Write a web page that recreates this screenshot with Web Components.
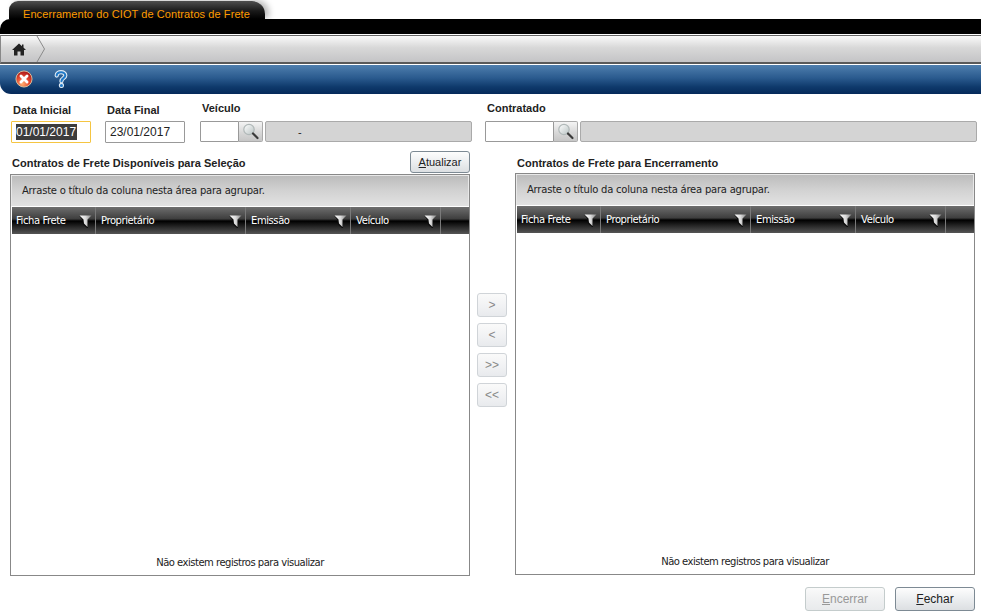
<!DOCTYPE html>
<html lang="pt-BR">
<head>
<meta charset="utf-8">
<title>Encerramento do CIOT de Contratos de Frete</title>
<style>
  html, body { margin: 0; padding: 0; background: #fff; }
  body { font-family: "Liberation Sans", Arial, sans-serif; width: 981px; height: 615px; overflow: hidden; }
</style>
</head>
<body>
<ciot-screen></ciot-screen>

<script>
const FUNNEL = `
  <svg width="13" height="13" viewBox="0 0 13 13">
    <defs><linearGradient id="fg" x1="0" x2="1" y1="0" y2="0">
      <stop offset="0" stop-color="#fafafa"/><stop offset=".5" stop-color="#dcdcdc"/><stop offset="1" stop-color="#858585"/>
    </linearGradient></defs>
    <path d="M0 .5 L3.5 5 L4 9.5 L8 13 L9 13 L8.5 5 Z" fill="#0c0c0c"/>
    <path d="M.5 .5 L12.5 .5 L8.5 4.5 L8.5 12 L5 8.5 L4.5 4.5 Z" fill="url(#fg)"/>
  </svg>`;

class TabStrip extends HTMLElement {
  constructor() {
    super();
    this.attachShadow({ mode: "open" });
  }
  connectedCallback() {
    this.shadowRoot.innerHTML = `
    <style>
      :host { display: block; height: 35px; background: #fff; }
      .tabs { height: 19px; padding-left: 9px; display: flex; }
      .tab {
        width: 256px; height: 18px; margin-top: 1px; box-sizing: border-box;
        padding: 6px 0 0 14px;
        background: linear-gradient(#4e4e4e, #1a1a1a 55%, #000);
        border-radius: 9px 13px 0 0;
        box-shadow: 4px -1px 6px rgba(0,0,0,.28);
        color: #ff9c00; font: 11px/14px "Liberation Sans", sans-serif; letter-spacing: .08px; white-space: nowrap;
      }
      .bar { height: 15px; background: #000; border-radius: 10px 0 0 0; }
    </style>
    <div class="tabs"><div class="tab"><slot></slot></div></div>
    <div class="bar"></div>`;
  }
}
customElements.define("tab-strip", TabStrip);

class BreadCrumb extends HTMLElement {
  constructor() {
    super();
    this.attachShadow({ mode: "open" });
  }
  connectedCallback() {
    this.shadowRoot.innerHTML = `
    <style>
      :host {
        display: flex; align-items: center; height: 29px; margin-bottom: 1px; box-sizing: border-box;
        border-top: 1px solid #666; border-bottom: 2px solid #5a5a5a; border-left: 1px solid #888;
        background: linear-gradient(#fafafa, #d8d8d8 45%, #c4c4c6);
      }
      .home { width: 35px; display: flex; justify-content: center; }
      svg { display: block; }
    </style>
    <div class="home">
      <svg width="14" height="13" viewBox="0 0 14 13"><path fill="#222" d="M7 .5 L10 3.2 V1.5 H11.5 V4.6 L14 7 H12 V12.5 H8.5 V8.5 H5.5 V12.5 H2 V7 H0 Z"/></svg>
    </div>
    <svg width="10" height="26" viewBox="0 0 10 26"><path d="M1 0 L8.5 13 L1 26" fill="none" stroke="#8a8a8a"/></svg>`;
  }
}
customElements.define("bread-crumb", BreadCrumb);

class ActionBar extends HTMLElement {
  constructor() {
    super();
    this.attachShadow({ mode: "open" });
  }
  connectedCallback() {
    this.shadowRoot.innerHTML = `
    <style>
      :host {
        display: flex; align-items: center; gap: 21px; height: 29px; box-sizing: border-box; padding: 0 0 1px 15px;
        background: linear-gradient(#4f7fae, #2a5a8e 45%, #0f3a6c 75%, #05295a);
        border-radius: 0 0 0 11px;
      }
      svg { display: block; }
    </style>
    <svg width="18" height="18" viewBox="0 0 19 19">
      <defs>
        <radialGradient id="red" cx=".4" cy=".8" r=".75"><stop offset="0" stop-color="#ffb070"/><stop offset=".55" stop-color="#e64a30"/><stop offset="1" stop-color="#b01c1c"/></radialGradient>
      </defs>
      <circle cx="9.5" cy="9.5" r="8.5" fill="url(#red)" stroke="#d8c4a0" stroke-width="1"/>
      <path d="M6.3 6.3 L12.7 12.7 M12.7 6.3 L6.3 12.7" stroke="#fff" stroke-width="3" stroke-linecap="round"/>
    </svg>
    <svg width="14" height="18" viewBox="0 0 16 21">
      <path d="M3 6.5 C3 1.5 13 1 13 6.5 C13 9.5 8.5 9.5 8.5 13" fill="none" stroke="#dfeaf4" stroke-width="5" stroke-linecap="round"/>
      <circle cx="8.5" cy="18" r="2.4" fill="#1f79c8" stroke="#dfeaf4" stroke-width="1.3"/>
      <path d="M3 6.5 C3 1.5 13 1 13 6.5 C13 9.5 8.5 9.5 8.5 13" fill="none" stroke="#1f79c8" stroke-width="2.4" stroke-linecap="round"/>
    </svg>`;
  }
}
customElements.define("action-bar", ActionBar);

class FormField extends HTMLElement {
  constructor() {
    super();
    this.attachShadow({ mode: "open" });
  }
  connectedCallback() {
    this.shadowRoot.innerHTML = `
    <style>
      :host { display: flex; flex-direction: column; }
      label {
        display: block; margin: 0 0 4px 2px;
        font: bold 11px/14px "Liberation Sans", sans-serif; color: #222; white-space: nowrap;
      }
      :host([raised]) label { margin-top: -2px; margin-bottom: 6px; }
    </style>
    <label>${this.getAttribute("label")}</label>
    <slot></slot>`;
  }
}
customElements.define("form-field", FormField);

class DateBox extends HTMLElement {
  constructor() {
    super();
    this.attachShadow({ mode: "open" });
  }
  connectedCallback() {
    this.shadowRoot.innerHTML = `
    <style>
      :host {
        display: flex; align-items: center; width: 80px; height: 22px; box-sizing: border-box; padding-left: 4px;
        border: 1px solid #999; border-radius: 1px; background: #fff;
        font: 12px "Liberation Sans", sans-serif; color: #222;
      }
      :host([focused]) { border-color: #f5c542; }
      :host([focused]) span { background: #3c3c3c; color: #fff; }
      span { line-height: 16px; padding: 0 1px 0 0; }
    </style>
    <span><slot></slot></span>`;
  }
}
customElements.define("date-box", DateBox);

class LookupBox extends HTMLElement {
  constructor() {
    super();
    this.attachShadow({ mode: "open" });
  }
  connectedCallback() {
    const w = this.getAttribute("input-width");
    const dw = this.getAttribute("desc-width");
    this.shadowRoot.innerHTML = `
    <style>
      :host { display: flex; height: 21px; font: 11px "Liberation Sans", sans-serif; color: #222; }
      .code { width: ${w}px; box-sizing: border-box; border: 1px solid #999; border-radius: 1px 0 0 1px; background: #fff; }
      .btn {
        width: 24px; box-sizing: border-box; display: flex; align-items: center; justify-content: center;
        border: 1px solid #aaa; border-left: 0; border-radius: 0 2px 2px 0;
        background: linear-gradient(#f4f4f4, #d8d8d8 55%, #c6c6c6);
      }
      .desc {
        width: ${dw}px; margin-left: 2px; box-sizing: border-box; display: flex; align-items: center; padding-left: 32px;
        border: 1px solid #aaa; border-radius: 2px; background: #d4d4d4;
      }
      svg { display: block; }
    </style>
    <div class="code"></div>
    <div class="btn">
      <svg width="19" height="17" viewBox="0 0 19 17">
        <defs><linearGradient id="gl" x1="0" x2="1" y1="0" y2="1"><stop offset="0" stop-color="#fff"/><stop offset="1" stop-color="#b8c2c2"/></linearGradient></defs>
        <circle cx="8" cy="6.5" r="5.2" fill="url(#gl)" stroke="#b0b8b8" stroke-width="1.2"/>
        <path d="M12 10.5 L16.5 15" stroke="#3a3a3a" stroke-width="2.2" stroke-linecap="round"/>
      </svg>
    </div>
    <div class="desc"><slot></slot></div>`;
  }
}
customElements.define("lookup-box", LookupBox);

class PushButton extends HTMLElement {
  constructor() {
    super();
    this.attachShadow({ mode: "open" });
  }
  connectedCallback() {
    this.shadowRoot.innerHTML = `
    <style>
      :host {
        display: flex; align-items: center; justify-content: center; box-sizing: border-box;
        width: 80px; height: 24px; border: 1px solid #7d8a94; border-radius: 3px;
        background: linear-gradient(#fdfdfd, #eceef0 50%, #dcdfe2);
        font: 12px "Liberation Sans", sans-serif; color: #222; white-space: nowrap;
      }
      :host([disabled]) { color: #999; border-color: #c4cccc; background: linear-gradient(#fafafa, #f0f1f2 50%, #e8eaec); }
      :host([small]) { width: 60px; height: 22px; font-size: 11px; }
      :host([mini]) { width: 30px; height: 24px; color: #888; border-color: #d0d4d8; background: linear-gradient(#fafafa, #f0f1f3 60%, #e8eaed); }
    </style>
    <slot></slot>`;
  }
}
customElements.define("push-button", PushButton);

class DataGrid extends HTMLElement {
  constructor() {
    super();
    this.attachShadow({ mode: "open" });
  }
  connectedCallback() {
    const cols = [["Ficha Frete", 84], ["Proprietário", 150], ["Emissão", 105], ["Veículo", 90]];
    const head = cols.map(([t, w]) => `
      <div class="th" style="width:${w}px"><span>${t}</span>${FUNNEL}</div>`).join("");
    this.shadowRoot.innerHTML = `
    <style>
      :host {
        display: flex; flex-direction: column; box-sizing: border-box; width: 460px; height: 402px;
        border: 1px solid #888; background: #fff;
        font: 10px "DejaVu Sans", sans-serif; color: #222;
      }
      .group {
        height: 31px; box-sizing: border-box; padding: 0 0 2px 10px; display: flex; align-items: center;
        background: linear-gradient(#bcbcbc, #d2d2d2 50%, #e2e2e2);
        border: 1px solid #e8e8e8; border-bottom: 0; letter-spacing: -.22px;
      }
      .head {
        display: flex; height: 27px; margin: 1px 0 0 1px;
        background: linear-gradient(#6e6e6e, #3e3e3e 44%, #000 52%, #2a2a2a 75%, #555);
      }
      .th {
        display: flex; align-items: center; justify-content: space-between; box-sizing: border-box;
        padding: 0 3px 0 5px; border-right: 1px solid #7a7a7a; color: #fff; letter-spacing: -.42px; white-space: nowrap;
      }
      .th:first-child { padding-left: 4px; }
      .th span { margin-bottom: 1px; }
      .th svg { display: block; margin-top: 1px; }
      .fill { flex: 1; }
      .body { flex: 1; display: flex; align-items: flex-end; justify-content: center; padding-bottom: 7px; letter-spacing: -.49px; }
    </style>
    <div class="group">Arraste o título da coluna nesta área para agrupar.</div>
    <div class="head">${head}<div class="fill"></div></div>
    <div class="body">Não existem registros para visualizar</div>`;
  }
}
customElements.define("data-grid", DataGrid);

class CiotScreen extends HTMLElement {
  constructor() {
    super();
    this.attachShadow({ mode: "open" });
  }
  connectedCallback() {
    this.shadowRoot.innerHTML = `
    <style>
      :host { display: block; }
      .form { display: flex; height: 57px; box-sizing: border-box; padding: 9px 0 0 11px; }
      .f2 { margin-left: 14px; }
      .f3 { margin-left: 15px; }
      .f4 { margin-left: 13px; }
      .panels { display: flex; padding-left: 10px; }
      .title { font: bold 11px/14px "Liberation Sans", sans-serif; color: #222; white-space: nowrap; }
      .left-head { height: 23px; display: flex; justify-content: space-between; align-items: flex-end; box-sizing: border-box; padding: 0 0 1px 2px; }
      .left-head .title { padding-bottom: 3px; }
      .right-head { height: 22px; display: flex; align-items: flex-end; padding: 0 0 1px 2px; box-sizing: border-box; }
      .right-head .title { padding-bottom: 2px; }
      .mid { width: 45px; display: flex; flex-direction: column; align-items: center; gap: 6px; padding: 142px 1px 0 0; box-sizing: border-box; }
      .footer { display: flex; justify-content: flex-end; gap: 10px; padding: 11px 6px 0 0; }
    </style>
    <tab-strip>Encerramento do CIOT de Contratos de Frete</tab-strip>
    <bread-crumb></bread-crumb>
    <action-bar></action-bar>
    <div class="form">
      <form-field label="Data Inicial"><date-box focused>01/01/2017</date-box></form-field>
      <form-field class="f2" label="Data Final"><date-box>23/01/2017</date-box></form-field>
      <form-field class="f3" raised label="Veículo"><lookup-box input-width="39" desc-width="207">-</lookup-box></form-field>
      <form-field class="f4" raised label="Contratado"><lookup-box input-width="69" desc-width="397"></lookup-box></form-field>
    </div>
    <div class="panels">
      <section>
        <div class="left-head"><span class="title">Contratos de Frete Disponíveis para Seleção</span><push-button small><span><u>A</u>tualizar</span></push-button></div>
        <data-grid></data-grid>
      </section>
      <div class="mid">
        <push-button mini>&gt;</push-button>
        <push-button mini>&lt;</push-button>
        <push-button mini>&gt;&gt;</push-button>
        <push-button mini>&lt;&lt;</push-button>
      </div>
      <section>
        <div class="right-head"><span class="title">Contratos de Frete para Encerramento</span></div>
        <data-grid></data-grid>
      </section>
    </div>
    <div class="footer">
      <push-button disabled><span><u>E</u>ncerrar</span></push-button>
      <push-button><span><u>F</u>echar</span></push-button>
    </div>`;
  }
}
customElements.define("ciot-screen", CiotScreen);
</script>
</body>
</html>
